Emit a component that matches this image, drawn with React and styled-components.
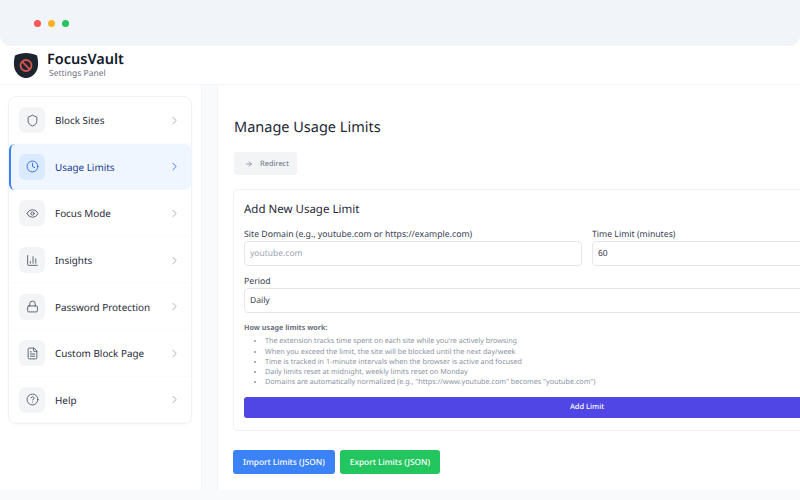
import React from "react";
import styled, { createGlobalStyle } from "styled-components";
import {
  ArrowRight,
  ChartColumn,
  ChevronRight,
  CircleHelp,
  Clock,
  Eye,
  FileText,
  Lock,
  Shield,
} from "lucide-react";

const NAV_ITEMS = [
  { label: "Block Sites", icon: Shield },
  { label: "Usage Limits", icon: Clock, active: true },
  { label: "Focus Mode", icon: Eye },
  { label: "Insights", icon: ChartColumn },
  { label: "Password Protection", icon: Lock },
  { label: "Custom Block Page", icon: FileText },
  { label: "Help", icon: CircleHelp },
];

const HELP_LINES = [
  "The extension tracks time spent on each site while you're actively browsing",
  "When you exceed the limit, the site will be blocked until the next day/week",
  "Time is tracked in 1-minute intervals when the browser is active and focused",
  "Daily limits reset at midnight, weekly limits reset on Monday",
  'Domains are automatically normalized (e.g., "https://www.youtube.com" becomes "youtube.com")',
];

const App = () => {
  return (
    <Page>
      <GlobalStyle />
      <WindowBar>
        <Dot color="#fb5555" />
        <Dot color="#fbb024" />
        <Dot color="#22c55e" />
      </WindowBar>
      <Header>
        <svg width="26" height="27" viewBox="0 0 26 27">
          <path
            d="M13 1 C17 1 21 2 24 3.5 C25.5 9 25.5 15 23.5 19 C21 23.5 17 26 13 26 C9 26 5 23.5 2.5 19 C0.5 15 0.5 9 2 3.5 C5 2 9 1 13 1 Z"
            fill="#1c2430"
          />
          <circle cx="13" cy="13.5" r="5.5" fill="none" stroke="#d9534f" strokeWidth="1.8" />
          <path d="M9.2 9.7 L16.8 17.3" stroke="#d9534f" strokeWidth="1.8" />
        </svg>
        <Brand>
          <BrandName>FocusVault</BrandName>
          <BrandSub>Settings Panel</BrandSub>
        </Brand>
      </Header>
      <Body>
        <Sidebar>
          <NavCard>
            {NAV_ITEMS.map((item) => {
              const Icon = item.icon;
              return (
                <NavItem key={item.label} $active={item.active}>
                  <IconBox $active={item.active}>
                    <Icon size={13} strokeWidth={1.6} />
                  </IconBox>
                  <NavLabel $active={item.active}>{item.label}</NavLabel>
                  <Chevron $active={item.active}>
                    <ChevronRight size={13} strokeWidth={1.6} />
                  </Chevron>
                </NavItem>
              );
            })}
          </NavCard>
        </Sidebar>
        <Main>
          <Content>
            <Title>Manage Usage Limits</Title>
            <RedirectButton>
              <ArrowRight size={8} strokeWidth={2} />
              Redirect
            </RedirectButton>
            <FormCard>
              <FormTitle>Add New Usage Limit</FormTitle>
              <FieldRow>
                <Field>
                  <Label>Site Domain (e.g., youtube.com or https://example.com)</Label>
                  <Input placeholder="youtube.com" readOnly />
                </Field>
                <Field>
                  <Label>Time Limit (minutes)</Label>
                  <Input value="60" readOnly />
                </Field>
              </FieldRow>
              <Field>
                <Label>Period</Label>
                <Input value="Daily" readOnly />
              </Field>
              <HelpBlock>
                <HelpTitle>How usage limits work:</HelpTitle>
                <HelpList>
                  {HELP_LINES.map((line) => (
                    <li key={line}>{line}</li>
                  ))}
                </HelpList>
              </HelpBlock>
              <AddButton>Add Limit</AddButton>
            </FormCard>
            <Actions>
              <ActionButton color="#3b82f6">Import Limits (JSON)</ActionButton>
              <ActionButton color="#22c55e">Export Limits (JSON)</ActionButton>
            </Actions>
          </Content>
        </Main>
      </Body>
    </Page>
  );
};

export default App;

const GlobalStyle = createGlobalStyle`
  html, body {
    margin: 0;
    padding: 0;
    background: #fff;
    overflow: hidden;
  }
  * {
    box-sizing: border-box;
  }
`;

const Page = styled.div`
  width: 800px;
  height: 500px;
  overflow: hidden;
  display: flex;
  flex-direction: column;
  background: #fff;
  color: #1f2937;
  font-family: "Noto Sans", "Open Sans", sans-serif;
  text-rendering: geometricPrecision;
`;

const WindowBar = styled.div`
  height: 46px;
  flex: none;
  display: flex;
  align-items: center;
  gap: 7px;
  padding-left: 34px;
  background: #f1f5f9;
  border-radius: 0 0 10px 10px;
`;

const Dot = styled.span`
  width: 7px;
  height: 7px;
  border-radius: 50%;
  background: ${(p) => p.color};
`;

const Header = styled.header`
  height: 39px;
  flex: none;
  display: flex;
  align-items: center;
  gap: 8px;
  padding: 0 0 0 13px;
  background: #fff;
  border-bottom: 1px solid #f1f3f5;
`;

const Brand = styled.div`
  display: flex;
  flex-direction: column;
`;

const BrandName = styled.div`
  font-size: 14.5px;
  font-weight: 600;
  line-height: 18px;
  color: #111827;
`;

const BrandSub = styled.div`
  font-size: 8.5px;
  line-height: 12px;
  padding-left: 2px;
  color: #6b7280;
`;

const Body = styled.div`
  flex: 1;
  display: flex;
  min-height: 0;
  padding-bottom: 10px;
  background: linear-gradient(to top, #f8fafc 10px, #fff 10px);
`;

const Sidebar = styled.aside`
  width: 202px;
  flex: none;
  padding: 11px 10px 0 8px;
  background: #fff;
  border-right: 1px solid #f1f3f5;
`;

const NavCard = styled.nav`
  width: 184px;
  border: 1px solid #f0f2f5;
  border-radius: 8px;
  background: #fff;
  box-shadow: 0 1px 2px rgba(15, 23, 42, 0.03);
`;

const NavItem = styled.div`
  height: 46.6px;
  display: flex;
  align-items: center;
  padding: 0 10px 0 8px;
  background: ${(p) => (p.$active ? "#eff6ff" : "transparent")};
  border-left: 2px solid ${(p) => (p.$active ? "#3b82f6" : "transparent")};
  border-radius: ${(p) => (p.$active ? "6px" : "0")};
  box-shadow: ${(p) => (p.$active ? "none" : "inset 0 -1px 0 #fafbfc")};
`;

const IconBox = styled.span`
  width: 26px;
  height: 26px;
  flex: none;
  display: flex;
  align-items: center;
  justify-content: center;
  border-radius: 6px;
  background: ${(p) => (p.$active ? "#dbeafe" : "#f3f4f6")};
  color: ${(p) => (p.$active ? "#2563eb" : "#4b5563")};
`;

const NavLabel = styled.span`
  flex: 1;
  margin-left: 10px;
  font-size: 9.9px;
  font-weight: 400;
  color: ${(p) => (p.$active ? "#1e3a8a" : "#1f2937")};
`;

const Chevron = styled.span`
  display: flex;
  color: ${(p) => (p.$active ? "#2563eb" : "#9ca3af")};
`;

const Main = styled.main`
  flex: 1;
  min-width: 0;
  padding-left: 15px;
  background: #f9fafb;
`;

const Content = styled.div`
  width: 740px;
  height: 100%;
  padding: 31px 0 0 15px;
  background: #fff;
  border-left: 1px solid #f3f4f6;
`;

const Title = styled.h1`
  margin: 0;
  padding-left: 1px;
  font-size: 14.5px;
  font-weight: 400;
  line-height: 22px;
  color: #1f2937;
`;

const RedirectButton = styled.button`
  margin: 14px 0 0 1px;
  width: 63px;
  height: 23px;
  display: flex;
  align-items: center;
  gap: 7px;
  padding: 0 0 0 11px;
  border: none;
  border-radius: 3px;
  background: #f3f4f6;
  font-family: inherit;
  font-size: 7.5px;
  color: #6b7280;
  text-rendering: inherit;
`;

const FormCard = styled.section`
  width: 707px;
  height: 242px;
  margin-top: 14px;
  padding: 11px 10px 0;
  border: 1px solid #f0f2f5;
  border-radius: 5px;
  background: #fff;
`;

const FormTitle = styled.h2`
  margin: 0;
  font-size: 11.5px;
  font-weight: 400;
  line-height: 18px;
  color: #1f2937;
`;

const FieldRow = styled.div`
  display: grid;
  grid-template-columns: 338px 338px;
  gap: 10px;
  margin-top: 8px;
`;

const Field = styled.div`
  display: flex;
  flex-direction: column;
  margin-bottom: 8px;
`;

const Label = styled.label`
  font-size: 8.7px;
  line-height: 14px;
  color: #374151;
`;

const Input = styled.input`
  width: 100%;
  height: 25px;
  padding: 0 5px;
  border: 1px solid #e5e7eb;
  border-radius: 4px;
  background: #fff;
  font-family: inherit;
  font-size: 8.5px;
  color: #374151;
  outline: none;
  text-rendering: inherit;
  &::placeholder {
    color: #9ca3af;
  }
`;

const HelpBlock = styled.div`
  margin-top: 10px;
  font-size: 7.2px;
  line-height: 10.25px;
  color: #6b7280;
`;

const HelpTitle = styled.div`
  font-weight: 700;
  margin-bottom: 3px;
  color: #6b7280;
`;

const HelpList = styled.ul`
  margin: 0;
  padding-left: 21px;
  color: #8a94a0;
`;

const AddButton = styled.button`
  display: block;
  width: 686px;
  height: 21px;
  margin-top: 9px;
  border: none;
  border-radius: 3px;
  background: #4f46e5;
  font-family: inherit;
  font-size: 7.5px;
  font-weight: 500;
  color: #fff;
  text-rendering: inherit;
`;

const Actions = styled.div`
  display: flex;
  gap: 5px;
  margin-top: 19px;
`;

const ActionButton = styled.button`
  height: 24px;
  padding: 0 10px;
  border: none;
  border-radius: 3px;
  background: ${(p) => p.color};
  font-family: inherit;
  font-size: 8.3px;
  font-weight: 500;
  color: #fff;
  text-rendering: inherit;
`;
